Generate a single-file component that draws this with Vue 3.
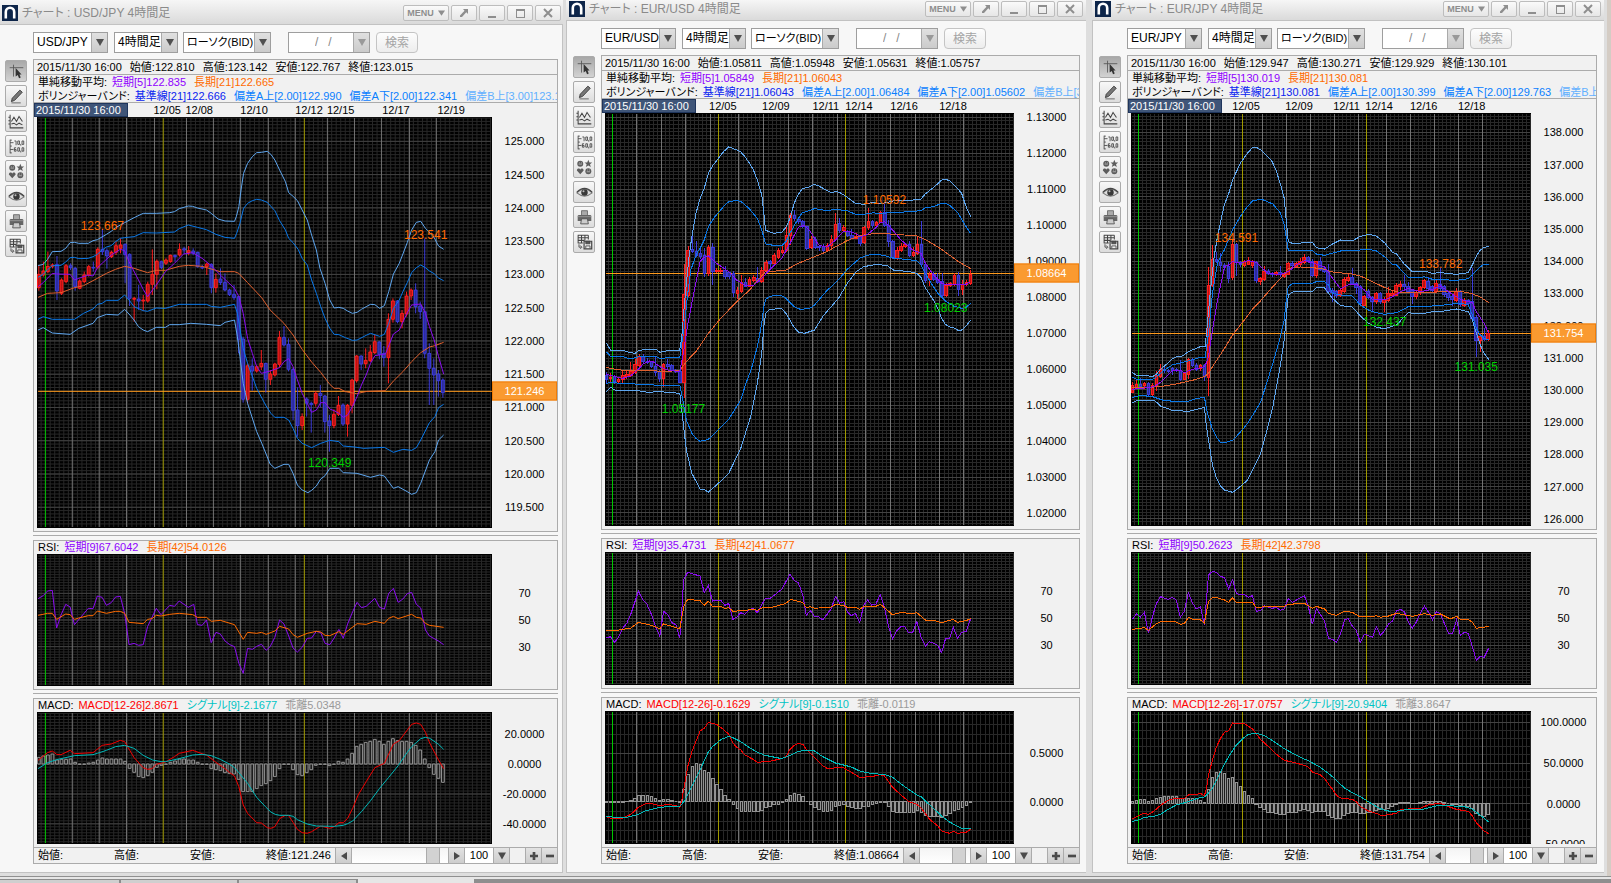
<script setup>
const minutes = '4時間足'
const points = (text) => text.trim().split(/\s+/).map((p) => p.split(',').map(Number))
const line = (text) => 'M' + points(text).map((p) => p.join(' ')).join('L')

const raw = [
  {
    pair: 'USD/JPY', cls: 'first',
    stamp: '2015/11/30 16:00',
    ohlc: ['始値:122.810', '高値:123.142', '安値:122.767', '終値:123.015'],
    sma: ['短期[5]122.835', '長期[21]122.665'],
    boll: ['基準線[21]122.666', '偏差A上[2.00]122.990', '偏差A下[2.00]122.341', '偏差B上[3.00]123.152'],
    x0: 102, w: 1251, start: 107, pitch: 12.483,
    dates: [['12/05', 422], ['12/08', 510], ['12/10', 661], ['12/12', 812], ['12/15', 899], ['12/17', 1051], ['12/19', 1203]],
    days: [199, 273, 348, 425, 513, 587, 661, 738, 812, 901, 975, 1049, 1126, 1200],
    green: 125, weeks: [449, 837],
    close: '121.246',
    main: {
      y0: 351, h: 1233, major: 424, step: 99.8, div: 10, price: 1174,
      axis: ['125.000', '124.500', '124.000', '123.500', '123.000', '122.500', '122.000', '121.500', '121.000', '120.500', '120.000', '119.500'],
      marks: [['123.667', 222, 677, 'hi'], ['123.541', 1111, 704, 'hi'], ['120.349', 847, 1388, 'lo']],
      candles: `r795 823 863 872,r785 813 825 830,r755 799 815 820,r790 795 799 805,b768 793 873 900,r835 840 880 885,r792 797 845 850,b790 797 803 810,b800 805 860 872,r838 843 865 868,r815 825 845 850,r795 800 825 830,b785 802 804 815,r742 748 802 808,b687 748 755 765,b745 752 768 806,r752 757 770 774,r725 737 757 765,r715 735 745 760,b730 733 764 850,b760 763 895 918,r890 895 898 965,b855 897 903 930,r885 900 903 932,r845 853 903 908,r748 823 853 885,r778 784 823 868,b782 785 803 808,r775 780 790 795,r764 766 785 788,b764 766 770 785,r730 748 765 770,b740 746 750 762,r738 752 758 766,b745 753 760 766,b755 757 800 803,b795 801 804 808,r788 792 800 825,b790 793 863 880,r820 838 863 878,b805 837 848 855,b820 847 870 874,b866 870 884 888,b855 883 893 900,b888 890 1018 1060,b1010 1017 1198 1208,r1090 1097 1198 1210,b1075 1098 1113 1172,r1096 1100 1113 1118,r1050 1090 1100 1110,b1088 1090 1138 1178,r1110 1122 1138 1155,r1088 1092 1125 1130,r993 1012 1093 1102,b978 1012 1035 1040,b1015 1033 1108 1114,b1104 1108 1231 1260,b1162 1230 1277 1310,r1240 1250 1277 1290,b1192 1197 1210 1250,b1205 1210 1214 1298,r1173 1180 1210 1220,b1155 1180 1187 1222,b1185 1188 1265 1298,b1245 1263 1277 1355,r1228 1243 1277 1285,r1188 1216 1243 1248,b1210 1215 1272 1278,r1212 1216 1272 1310,r1136 1140 1216 1240,r1065 1068 1142 1148,b1066 1068 1092 1110,r1045 1081 1091 1105,r1035 1056 1082 1086,r1003 1025 1058 1062,b1024 1026 1063 1078,b1038 1060 1073 1100,r940 958 1073 1150,r895 903 958 968,b900 903 965 970,r930 940 965 985,r875 888 942 950,r865 870 888 900,b850 870 920 940,b905 918 935 957,b715 935 1060 1075,b1030 1060 1105 1215,b1075 1105 1125 1215,b1110 1122 1142 1190,b1135 1140 1178 1193`,
      lines: [
        ['band3', '105,797 119,793 131,778 144,755 168,754 181,745 193,728 205,727 217,730 243,730 256,722 268,719 293,703 306,694 318,683 343,668 369,653 394,640 430,640 467,638 480,635 493,626 518,618 530,619 543,624 568,630 581,640 600,657 619,663 645,664 650,650 657,620 663,570 670,520 681,490 694,470 706,458 719,457 735,454 745,463 756,480 769,510 785,545 794,578 806,589 818,602 831,630 845,660 857,705 870,750 880,805 894,850 907,900 919,924 932,922 944,925 956,933 969,940 982,937 994,928 1007,920 1019,913 1031,914 1044,925 1057,917 1069,875 1082,822 1098,790 1108,762 1120,728 1132,690 1145,667 1157,664 1170,685 1181,697 1194,713 1206,738 1220,748'],
        ['band2', '105,832 119,823 131,809 144,797 168,796 181,786 193,773 205,772 217,776 243,775 256,770 268,763 281,750 293,741 306,737 318,725 331,715 343,713 369,710 394,698 430,699 480,696 493,686 518,675 543,682 568,689 594,703 619,712 645,715 651,700 660,670 670,625 681,610 694,602 706,598 719,600 735,607 756,632 769,662 785,690 794,715 806,728 820,748 831,775 845,795 857,840 870,880 882,920 894,955 907,985 919,1003 932,1004 950,1013 969,1021 982,1020 1007,1006 1019,1000 1044,1009 1057,1003 1069,970 1082,925 1098,900 1108,875 1120,848 1132,818 1145,803 1157,795 1170,803 1181,813 1194,821 1206,834 1220,842'],
        ['band2', '105,958 119,950 144,958 205,958 230,940 256,927 268,913 281,910 293,901 325,901 343,885 355,900 369,920 394,932 406,934 430,924 455,925 493,913 568,913 581,919 606,922 619,919 645,913 653,940 669,1045 681,1090 706,1165 732,1218 745,1240 756,1252 781,1252 794,1260 806,1285 818,1315 831,1330 857,1343 882,1330 907,1321 932,1325 944,1338 975,1341 1000,1345 1057,1342 1082,1357 1108,1348 1132,1351 1145,1343 1157,1320 1181,1268 1196,1250 1206,1223 1220,1213'],
        ['band3', '105,990 119,983 144,999 193,1003 217,985 256,970 268,953 293,943 325,945 343,928 355,942 369,960 381,980 394,990 406,995 430,982 455,982 467,974 493,974 525,970 568,973 606,977 619,967 645,960 653,1010 660,1070 669,1150 681,1210 706,1295 720,1330 743,1392 756,1405 781,1393 794,1393 806,1420 818,1455 831,1470 847,1478 857,1471 870,1458 882,1437 894,1427 907,1405 932,1405 944,1418 982,1420 1019,1432 1044,1425 1057,1428 1082,1465 1095,1460 1120,1475 1132,1483 1145,1478 1157,1450 1181,1380 1196,1355 1206,1320 1220,1305'],
        ['ma-long', '105,892 131,880 168,878 205,863 230,857 268,835 293,820 318,808 343,799 369,805 406,818 430,811 455,811 493,799 518,796 556,799 606,815 645,815 657,820 681,848 719,892 743,930 781,970 806,1005 831,1048 857,1086 882,1117 907,1153 919,1165 932,1165 950,1175 980,1181 1010,1174 1060,1172 1082,1143 1108,1115 1132,1085 1157,1058 1181,1041 1196,1037 1220,1027'],
        ['ma-short', '105,860 119,848 144,820 156,822 193,823 205,840 217,835 243,825 256,828 268,803 281,790 306,765 331,748 343,752 355,785 381,840 394,868 406,890 430,855 455,815 480,790 505,762 530,758 556,775 581,797 606,825 645,865 657,890 669,940 681,1015 694,1060 706,1100 719,1120 743,1113 769,1103 781,1085 794,1076 806,1100 818,1140 831,1180 845,1210 857,1237 870,1230 882,1208 894,1208 907,1227 919,1232 932,1240 944,1252 956,1245 969,1220 982,1190 994,1155 1007,1125 1019,1090 1031,1067 1060,1062 1082,1002 1098,990 1120,938 1132,915 1157,912 1170,940 1181,980 1194,1020 1206,1070 1220,1122'],
      ],
    },
    rsi: {
      y0: 72, h: 396, major: 190, step: 80, div: 10, axis: ['70', '50', '30'],
      legend: ['短期[9]67.6042', '長期[42]54.0126'],
      lines: [
        ['ma-short', '105,206 119,197 131,183 144,181 156,294 168,255 181,223 193,231 205,284 243,235 256,236 268,198 281,202 293,226 306,218 318,201 331,199 343,250 355,344 369,340 381,346 394,344 406,290 430,235 443,254 467,226 480,229 493,213 518,232 533,223 543,284 556,286 568,270 581,338 594,307 606,312 619,333 632,344 645,350 657,400 669,430 681,355 694,358 706,349 719,343 732,361 743,350 756,322 769,270 781,282 794,318 806,354 818,366 831,352 845,325 857,324 870,304 882,308 894,340 907,344 919,324 932,298 944,325 956,282 970,245 982,217 994,233 1007,229 1031,205 1044,232 1057,237 1069,190 1082,175 1095,217 1108,207 1120,191 1132,187 1145,223 1157,234 1170,300 1181,318 1206,333 1220,344'],
        ['rsi-long', '105,256 131,250 144,250 156,268 181,252 193,254 205,268 217,264 243,257 256,257 268,243 293,250 318,244 331,244 343,250 355,277 394,281 406,268 418,266 430,256 443,258 467,253 493,250 530,254 543,262 568,262 581,274 606,271 645,284 669,328 681,307 706,310 719,307 732,313 756,303 769,289 794,297 806,314 818,322 845,310 870,304 882,306 894,316 907,317 932,305 944,313 982,281 1007,283 1031,274 1057,280 1069,265 1082,259 1095,266 1132,253 1145,262 1157,264 1170,280 1181,286 1220,292'],
      ],
    },
    macd: {
      y0: 546, h: 396, major: 613, step: 89.5, div: 10, axis: ['20.0000', '0.0000', '-20.0000', '-40.0000'],
      legend: ['MACD[12-26]2.8671', 'シグナル[9]-2.1677', '乖離5.0348'],
      base: 702,
      bars: '682 678 675 672 690 688 688 687 697 703 703 699 697 690 684 687 687 687 687 694 715 727 740 743 737 727 712 706 703 697 693 687 687 690 690 697 703 703 716 719 722 728 731 732 748 785 785 785 776 767 761 752 740 716 703 703 719 734 737 728 719 706 703 703 707 703 694 697 687 670 649 643 637 634 628 634 643 634 626 632 634 634 637 646 660 687 713 733 745 757',
      lines: [
        ['macd-line', '105,691 131,668 144,663 156,673 168,674 193,661 205,671 256,668 281,646 306,642 331,631 343,635 369,683 394,713 406,718 418,716 430,703 455,696 480,680 493,670 530,661 556,671 568,675 594,697 619,716 632,728 645,738 657,770 669,825 681,850 706,878 719,879 735,893 745,895 756,890 769,866 785,856 794,857 806,877 818,898 831,908 845,910 857,905 882,888 907,895 919,890 932,878 944,878 956,865 970,835 985,795 1007,755 1031,713 1057,700 1082,642 1098,632 1132,583 1145,579 1157,583 1170,607 1182,640 1206,690 1220,716'],
        ['signal-line', '105,716 131,698 156,689 205,677 256,674 268,670 293,661 318,650 343,646 369,655 394,676 420,690 443,695 455,695 493,686 530,675 556,673 581,677 606,688 632,703 645,713 657,728 681,760 706,802 730,830 745,846 757,853 769,856 794,856 806,859 818,869 845,882 870,888 919,889 944,886 956,881 970,873 994,845 1019,812 1044,775 1069,742 1095,707 1120,667 1132,650 1157,626 1170,622 1182,625 1206,643 1220,658'],
      ],
    },
  },
  {
    pair: 'EUR/USD', cls: 'second',
    stamp: '2015/11/30 16:00',
    ohlc: ['始値:1.05811', '高値:1.05948', '安値:1.05631', '終値:1.05757'],
    sma: ['短期[5]1.05849', '長期[21]1.06043'],
    boll: ['基準線[21]1.06043', '偏差A上[2.00]1.06484', '偏差A下[2.00]1.05602', '偏差B上[3.00]1.06704'],
    x0: 131, w: 1187, start: 135, pitch: 11.88,
    dates: [['12/05', 433], ['12/09', 587], ['12/11', 733], ['12/14', 828], ['12/16', 959], ['12/18', 1101]],
    days: [222, 294, 365, 437, 519, 590, 663, 734, 805, 888, 960, 1031, 1102, 1171],
    green: 152, weeks: [460, 829],
    close: '1.08664',
    main: {
      y0: 339, h: 1239, major: 352, step: 107.9, div: 10, price: 820,
      axis: ['1.13000', '1.12000', '1.11000', '1.10000', '1.09000', '1.08000', '1.07000', '1.06000', '1.05000', '1.04000', '1.03000', '1.02000'],
      marks: [['1.10592', 879, 599, 'hi'], ['1.05177', 296, 1228, 'lo'], ['1.08023', 1057, 923, 'lo']],
      candles: `b1115 1125 1137 1150,r1120 1132 1136 1148,b1125 1130 1143 1152,r1132 1137 1143 1150,r1112 1125 1138 1148,r1110 1123 1128 1138,r1087 1115 1125 1130,r1078 1093 1117 1122,r1063 1070 1095 1100,b1063 1070 1083 1088,b1075 1083 1088 1092,b1083 1085 1100 1104,b1070 1100 1116 1127,b1110 1113 1136 1145,r1088 1092 1136 1160,b1078 1092 1100 1106,b1092 1097 1110 1114,b1108 1110 1114 1118,b1110 1113 1148 1150,r793 883 1148 1195,r738 750 885 890,b698 748 755 760,b724 755 765 772,b740 760 768 776,b745 765 820 832,r735 743 820 828,b728 743 815 855,r805 811 815 820,r805 810 815 820,b798 810 830 838,b815 818 830 836,b812 820 878 890,r862 870 880 897,r825 848 873 878,b833 848 858 862,r830 838 858 862,r825 833 842 846,b802 835 845 850,r800 810 845 850,r780 787 812 816,b780 785 790 806,r760 767 790 798,r745 752 772 778,r735 750 757 762,r675 705 752 756,r640 646 705 735,b630 647 655 662,b655 658 665 672,b660 663 680 684,b678 680 745 750,r708 718 743 748,b712 717 743 746,b734 738 743 752,b732 738 752 756,r728 735 750 755,r705 717 737 747,r640 672 718 724,b655 670 690 700,r675 683 690 697,b690 695 707 712,b687 705 714 718,r700 708 714 718,b704 708 730 738,r677 682 728 732,r625 663 683 690,b660 663 675 685,r664 668 677 685,r634 637 667 670,b612 637 675 680,b660 675 725 740,b720 725 773 778,r740 750 775 780,r730 738 750 755,r728 732 738 745,b723 733 765 770,r742 758 765 772,r710 732 760 765,b662 733 793 800,b790 793 840 850,r815 823 838 858,b815 823 838 844,b820 838 847 852,b820 845 885 890,r848 855 885 890,r845 850 857 862,r820 825 853 858,b815 825 868 887,r840 852 868 885,r840 848 854 858,r810 822 850 854`,
      lines: [
        ['band3', '135,1030 147,1050 182,1050 194,1055 218,1060 230,1051 254,1048 280,1048 290,1057 313,1052 348,1050 354,1010 360,930 367,850 375,770 383,710 395,640 407,595 419,565 431,520 443,498 460,475 475,455 490,441 502,445 513,450 525,456 537,470 549,488 561,508 573,540 586,585 592,640 597,691 608,695 620,700 644,697 656,682 668,655 680,610 692,583 704,566 720,562 739,553 751,558 775,571 787,578 800,575 812,577 834,592 858,610 882,613 910,607 930,612 950,607 980,600 1010,602 1048,597 1060,582 1084,563 1108,540 1119,538 1131,542 1154,565 1166,580 1179,620 1192,650'],
        ['band2', '135,1055 147,1069 182,1070 206,1077 230,1070 280,1069 290,1076 313,1073 348,1072 360,990 370,890 380,810 390,780 400,755 407,745 419,720 431,680 450,650 475,620 490,605 513,601 525,604 549,625 573,655 586,690 597,732 620,736 644,737 656,725 668,700 692,655 704,638 720,633 739,626 775,632 800,628 834,632 858,643 890,642 910,638 930,642 960,637 1000,636 1048,632 1060,624 1084,620 1108,610 1119,610 1131,616 1154,637 1179,680 1192,700'],
        ['band2', '135,1150 147,1148 182,1150 218,1152 254,1154 290,1156 348,1156 355,1190 367,1260 383,1300 395,1315 407,1324 431,1318 455,1295 490,1258 525,1200 540,1150 555,1110 573,1040 586,970 592,920 597,898 608,890 625,886 644,887 656,895 680,920 700,929 730,923 739,915 775,872 810,838 834,808 870,775 890,766 915,763 940,766 960,773 1000,778 1036,782 1048,795 1060,820 1084,860 1097,880 1119,903 1142,918 1166,925 1179,922 1192,910'],
        ['band3', '135,1175 147,1162 160,1170 200,1172 218,1170 254,1177 290,1175 348,1180 355,1240 367,1350 383,1420 407,1467 419,1469 431,1476 455,1455 490,1420 525,1345 540,1295 555,1245 573,1150 586,1060 592,980 597,940 608,928 644,926 656,940 680,982 692,996 710,1000 739,990 764,948 810,893 834,850 860,815 882,800 920,793 950,797 970,811 1010,814 1036,820 1048,832 1060,862 1084,900 1097,925 1108,955 1119,973 1131,981 1142,983 1154,990 1166,990 1179,978 1192,961'],
        ['ma-long', '135,1102 160,1108 194,1112 242,1111 301,1114 348,1112 367,1085 383,1067 395,1055 431,1000 467,955 513,905 549,872 573,843 597,815 644,812 656,810 692,790 739,770 775,755 800,740 834,722 858,712 890,703 930,700 1000,705 1036,708 1060,718 1108,748 1154,783 1192,806'],
        ['ma-short', '135,1123 147,1126 182,1135 206,1127 230,1105 242,1092 260,1083 270,1085 290,1100 313,1110 348,1115 360,1050 370,980 383,910 400,820 407,785 419,772 431,768 455,790 490,815 513,840 537,855 560,858 586,835 608,810 644,775 668,730 692,682 710,676 727,695 751,735 775,742 800,720 824,693 850,697 875,710 893,703 917,683 930,668 942,665 966,690 990,720 1024,750 1048,760 1060,788 1084,825 1108,850 1119,853 1154,854 1179,853 1192,845'],
      ],
    },
    rsi: {
      y0: 66, h: 399, major: 184, step: 81, div: 10, axis: ['70', '50', '30'],
      legend: ['短期[9]35.4731', '長期[42]41.0677'],
      lines: [
        ['ma-short', '135,324 147,320 159,337 171,320 182,295 194,280 206,252 228,184 240,208 252,221 266,254 278,290 290,318 301,244 313,254 325,278 337,284 348,325 353,260 359,150 371,127 383,131 407,138 419,187 431,167 443,213 467,211 479,226 490,220 502,268 513,262 525,248 537,253 549,240 561,235 573,248 596,206 608,207 644,178 668,133 680,151 692,158 705,195 715,256 727,242 739,259 751,260 763,270 787,237 800,200 812,219 824,215 834,245 846,257 858,250 870,277 882,226 893,210 905,225 917,222 930,194 942,232 954,290 966,327 978,302 990,290 1000,289 1013,309 1024,307 1036,274 1048,320 1061,348 1073,335 1097,346 1108,368 1119,327 1131,325 1142,292 1154,325 1166,307 1179,304 1192,267'],
        ['rsi-long', '135,301 159,303 182,298 206,294 228,277 266,286 290,296 301,282 325,289 348,297 353,265 360,228 371,208 407,212 419,226 431,214 443,229 467,230 479,235 490,233 502,244 537,241 561,238 573,241 586,234 620,231 656,220 670,208 705,217 715,233 727,230 739,235 787,231 800,223 824,227 834,232 858,232 870,238 882,229 917,229 930,223 942,233 966,255 978,250 1000,247 1013,252 1036,248 1061,270 1084,270 1108,279 1119,274 1142,268 1154,277 1179,272 1192,266'],
      ],
    },
    macd: {
      y0: 543, h: 399, major: 670, step: 145, div: 5, axis: ['0.5000', '0.0000'],
      legend: ['MACD[12-26]-0.1629', 'シグナル[9]-0.1510', '乖離-0.0119'],
      base: 815,
      bars: '817 817 817 817 817 814 810 805 796 796 796 799 805 811 808 808 811 815 818 778 732 710 700 702 720 727 744 762 778 796 808 822 836 843 845 845 845 845 840 833 830 824 822 817 808 796 790 792 798 815 824 833 839 843 845 842 828 826 824 830 833 834 836 830 828 824 821 818 817 828 845 848 848 848 848 848 842 846 856 858 860 860 862 857 850 840 839 833 826 817',
      lines: [
        ['macd-line', '135,860 147,865 182,865 206,853 228,832 250,821 266,821 290,827 313,823 337,827 348,832 354,810 371,710 383,665 407,603 419,595 431,577 455,583 467,592 490,612 502,638 513,652 525,660 537,675 561,688 573,697 608,694 644,686 656,680 668,658 680,646 692,640 705,643 715,658 739,682 763,707 775,715 787,717 800,712 824,714 846,727 870,742 905,740 930,734 942,738 966,772 990,795 1013,815 1036,823 1048,833 1073,868 1097,888 1108,903 1131,910 1142,904 1154,910 1179,907 1192,898'],
        ['signal-line', '135,859 159,862 194,862 228,853 250,842 290,832 337,828 348,829 360,815 371,795 383,770 407,720 431,665 443,650 467,629 490,619 502,623 525,635 549,652 573,667 596,676 620,681 644,686 668,676 692,664 720,660 739,663 763,680 800,699 846,711 870,723 905,731 942,733 966,742 990,762 1036,795 1048,800 1084,835 1108,858 1131,876 1154,889 1166,895 1192,896'],
      ],
    },
  },
  {
    pair: 'EUR/JPY', cls: 'third',
    stamp: '2015/11/30 16:00',
    ohlc: ['始値:129.947', '高値:130.271', '安値:129.929', '終値:130.101'],
    sma: ['短期[5]130.019', '長期[21]130.081'],
    boll: ['基準線[21]130.081', '偏差A上[2.00]130.399', '偏差A下[2.00]129.763', '偏差B上[3.00]130.558'],
    x0: 137, w: 1193, start: 141, pitch: 11.92,
    dates: [['12/05', 439], ['12/09', 597], ['12/11', 740], ['12/14', 836], ['12/16', 969], ['12/18', 1112]],
    days: [231, 302, 375, 446, 530, 600, 672, 744, 816, 899, 970, 1042, 1113, 1185],
    green: 160, weeks: [469, 839],
    close: '131.754',
    main: {
      y0: 339, h: 1239, major: 397, step: 96.6, div: 10, price: 1000,
      axis: ['138.000', '137.000', '136.000', '135.000', '134.000', '133.000', '132.000', '131.000', '130.000', '129.000', '128.000', '127.000', '126.000'],
      marks: [['134.591', 387, 713, 'hi'], ['133.782', 996, 791, 'hi'], ['132.437', 829, 967, 'lo'], ['131.035', 1102, 1102, 'lo']],
      candles: `r1145 1155 1178 1180,r1140 1152 1162 1168,b1135 1152 1160 1168,r1146 1150 1157 1168,b1146 1150 1183 1192,r1150 1155 1183 1190,r1113 1125 1157 1172,r1092 1108 1128 1134,b1100 1108 1112 1118,b1106 1110 1115 1120,b1100 1106 1112 1125,b1104 1108 1112 1116,b1080 1110 1137 1142,r1115 1120 1137 1140,r1075 1078 1123 1138,b1074 1077 1097 1100,b1090 1095 1107 1112,r1092 1097 1105 1112,b1092 1095 1130 1142,r800 856 1133 1187,r735 777 856 862,b755 777 785 788,b758 787 797 815,b790 797 803 810,b785 800 835 850,r720 733 833 840,b728 733 788 828,b783 787 793 800,r780 785 797 800,r770 783 792 796,r780 785 797 804,b784 787 840 850,r830 835 843 855,r797 813 837 842,b808 813 820 826,b815 820 824 830,r812 818 824 828,b798 817 824 832,r816 822 830 834,r785 790 823 826,b783 790 797 801,r786 790 798 802,r775 783 793 797,r762 773 788 792,b768 773 782 788,b778 783 827 830,r782 785 827 835,b772 783 808 812,b800 806 813 818,b793 813 873 876,b865 870 877 905,b870 875 887 895,r866 870 887 892,r830 838 873 880,r823 833 840 846,b805 833 850 856,b845 850 862 883,b856 860 910 914,r885 890 915 918,b868 873 893 898,b888 893 905 932,r875 880 905 912,b875 880 905 912,r890 898 908 937,r860 880 900 905,r873 880 886 892,r850 857 885 888,r843 852 858 870,b825 852 860 866,b845 858 875 880,b868 872 890 912,r870 877 888 897,r858 862 878 884,r838 842 862 868,b830 843 865 870,b855 860 872 878,r838 850 873 878,b805 852 865 872,b856 860 883 890,b876 880 893 902,b886 890 898 917,r865 875 900 905,b870 875 912 920,r895 900 915 920,b896 900 910 915,b805 905 955 960,b945 953 1020 1072,r1000 1008 1020 1055,b985 1008 1018 1024,r990 1000 1017 1022`,
      lines: [
        ['band3', '141,1118 153,1125 177,1125 201,1130 213,1122 225,1108 237,1098 260,1077 272,1070 290,1068 308,1055 320,1050 344,1040 358,1040 364,980 375,860 385,770 395,710 415,615 428,582 440,540 463,490 480,465 499,443 511,442 525,450 547,472 558,485 570,512 582,550 594,595 600,660 606,725 618,730 640,730 654,727 678,727 690,743 714,747 738,732 762,720 800,721 821,709 845,703 869,708 893,728 917,757 929,762 952,792 976,815 1012,813 1036,820 1060,818 1108,823 1143,818 1155,795 1167,768 1179,750 1190,742 1204,740'],
        ['band2', '141,1132 153,1138 201,1139 213,1130 237,1110 260,1095 308,1083 344,1072 358,1072 368,1000 380,880 395,790 415,750 440,690 463,650 480,625 499,603 525,597 560,612 582,638 594,675 606,750 630,753 678,752 690,762 714,766 762,753 821,750 845,747 869,753 893,770 917,793 929,795 952,820 964,832 1000,833 1012,830 1036,838 1108,841 1143,836 1155,825 1179,800 1190,793 1204,793'],
        ['band2', '141,1192 165,1186 201,1190 237,1202 272,1204 308,1204 332,1196 356,1192 365,1240 380,1287 392,1312 404,1327 416,1328 440,1321 460,1300 485,1270 523,1208 540,1155 560,1090 580,1020 594,960 600,900 606,860 620,850 678,850 690,845 714,845 726,855 738,880 762,885 797,888 821,915 845,930 869,938 893,943 929,938 964,920 1036,918 1072,915 1119,909 1143,915 1155,945 1167,985 1179,1005 1190,1015 1204,1020'],
        ['band3', '141,1208 153,1202 177,1200 206,1200 225,1218 260,1231 308,1234 332,1228 356,1222 362,1280 380,1395 392,1435 404,1458 416,1470 440,1477 460,1462 485,1440 523,1362 540,1300 560,1220 580,1110 594,1020 600,950 606,885 620,876 678,875 690,863 714,863 738,895 762,917 797,921 821,948 845,970 869,982 893,986 929,975 964,938 988,941 1012,940 1036,935 1072,933 1108,927 1143,935 1155,960 1167,1000 1179,1035 1190,1060 1204,1079'],
        ['ma-long', '141,1162 189,1162 225,1160 272,1152 332,1138 356,1130 368,1120 380,1100 416,1045 440,1005 475,960 499,928 523,903 560,860 594,824 606,805 642,801 702,805 738,816 797,822 821,828 857,845 905,868 941,878 988,877 1048,876 1119,874 1155,881 1180,892 1204,908'],
        ['ma-short', '141,1168 165,1165 189,1163 206,1160 225,1147 260,1112 284,1110 296,1118 320,1108 344,1104 358,1098 368,1070 380,990 395,900 416,800 428,795 440,785 463,790 487,782 511,787 523,800 547,820 582,824 606,815 630,795 654,782 666,785 714,800 738,835 762,866 785,855 809,852 833,870 857,898 893,900 917,890 941,875 964,865 1000,875 1036,868 1060,858 1084,875 1119,898 1155,908 1167,935 1190,970 1204,1000'],
      ],
    },
    rsi: {
      y0: 66, h: 399, major: 184, step: 81, div: 10, axis: ['70', '50', '30'],
      legend: ['短期[9]50.2623', '長期[42]42.3798'],
      lines: [
        ['ma-short', '141,268 153,252 165,261 177,247 189,310 201,260 213,220 225,200 248,208 260,202 272,210 284,262 296,244 308,188 320,218 332,237 344,230 356,285 368,135 380,124 392,127 404,139 416,143 428,176 440,149 451,190 463,195 475,193 487,202 499,197 511,244 523,242 535,228 558,235 570,232 582,241 594,237 606,206 618,217 654,197 666,230 678,283 690,235 714,273 726,325 738,328 750,337 762,312 774,270 785,266 797,288 809,302 821,337 833,312 857,322 869,290 881,316 893,302 905,282 917,273 929,243 941,238 952,245 964,275 976,294 988,276 1000,250 1012,228 1024,246 1036,270 1048,245 1060,252 1084,310 1096,310 1108,270 1119,316 1131,307 1143,310 1155,350 1167,390 1179,378 1190,382 1204,354'],
        ['rsi-long', '141,298 177,293 189,301 213,281 225,275 272,276 284,283 296,281 308,262 320,268 344,270 356,279 368,215 380,203 392,203 416,210 428,217 440,203 451,217 499,217 511,233 547,229 594,230 606,223 654,220 678,235 690,229 714,237 726,250 750,256 774,244 797,247 821,261 845,259 857,261 869,257 881,262 905,258 929,250 976,259 1012,251 1036,256 1060,252 1084,264 1096,264 1108,259 1119,268 1143,268 1155,277 1167,295 1204,289'],
      ],
    },
    macd: {
      y0: 543, h: 399, major: 577, step: 122, div: 5, axis: ['100.0000', '50.0000', '0.0000', '-50.0000'],
      legend: ['MACD[12-26]-17.0757', 'シグナル[9]-20.9404', '乖離3.8647'],
      base: 821,
      bars: '815 811 808 808 814 810 805 801 798 798 798 798 806 804 804 804 806 811 817 778 742 727 724 730 745 742 757 769 784 796 805 822 833 838 846 848 851 854 854 848 848 846 842 839 842 848 845 843 845 856 863 866 866 857 851 848 846 850 851 848 848 840 838 838 834 830 824 817 817 817 820 820 817 814 814 814 814 814 817 821 823 824 825 828 830 835 850 856 860 854',
      lines: [
        ['macd-line', '141,866 165,854 177,850 189,853 206,843 225,826 248,811 272,804 296,806 308,795 332,793 344,790 356,797 362,775 368,735 380,690 392,650 404,625 416,607 428,602 440,579 475,580 487,589 499,596 523,628 547,650 560,663 582,682 594,691 618,696 654,706 666,712 678,726 702,735 714,745 726,762 738,778 750,796 762,804 797,808 809,815 821,830 845,843 869,850 881,856 893,856 929,850 941,840 970,836 1000,835 1024,824 1060,820 1084,830 1108,838 1143,844 1155,858 1167,878 1190,903 1204,911'],
        ['signal-line', '141,874 165,868 177,862 201,860 225,853 248,838 272,825 308,815 332,806 358,800 380,775 404,725 428,680 451,645 475,622 487,613 511,610 535,617 558,631 594,656 618,669 642,682 666,692 702,712 738,740 750,752 774,774 797,788 821,800 845,815 869,830 893,841 917,845 952,840 1012,837 1048,828 1084,827 1131,830 1155,837 1179,856 1204,876'],
      ],
    },
  },
]

function buildPlot(win, plot) {
  const right = win.x0 + win.w
  const bottom = plot.y0 + plot.h
  let minor = ''
  for (let i = 0; i <= 100; i++) minor += `M${win.start + (i - 0.5) * win.pitch} ${plot.y0 + 3}V${bottom - 3}`
  const gap = plot.step / plot.div
  const first = plot.major - Math.floor((plot.major - plot.y0 - 3) / gap) * gap
  for (let y = first; y < bottom - 3; y += gap) minor += `M${win.x0 + 3} ${y}H${right - 3}`
  let major = ''
  for (let y = plot.major; y < bottom; y += plot.step) major += `M${win.x0 + 3} ${y}H${right - 3}`
  const vertical = (xs) => xs.map((x) => `M${x} ${plot.y0 + 3}V${bottom - 3}`).join('')
  const half = win.pitch * 0.31
  const shapes = { r: '', b: '' }
  if (plot.candles) {
    plot.candles.split(',').forEach((text, i) => {
      const kind = text[0]
      const [hi, top, low, end] = text.slice(1).split(' ').map(Number)
      const x = win.start + i * win.pitch
      shapes[kind] += `M${x} ${hi}V${top}M${x} ${low}V${end}M${x - half} ${top}H${x + half}V${low}H${x - half}Z`
    })
  }
  let bars = ''
  if (plot.bars) {
    plot.bars.split(' ').forEach((end, i) => {
      const x = win.start + i * win.pitch
      bars += `M${x - half} ${plot.base}H${x + half}V${end}H${x - half}Z`
    })
  }
  return {
    ...plot,
    box: `${win.x0} ${plot.y0} ${win.w} ${plot.h}`,
    minor, major,
    days: vertical(win.days), weeks: vertical(win.weeks), green: vertical([win.green]),
    red: shapes.r, blue: shapes.b, barPath: bars,
    priceLine: plot.price ? `M${win.x0 + 3} ${plot.price}H${right}` : '',
    curves: plot.lines.map(([cls, text]) => ({ cls, d: line(text) })),
    ticks: plot.axis.map((text, i) => ({ text, top: ((plot.major + i * plot.step - plot.y0) / plot.h) * 100 + '%' })),
    tag: plot.price ? ((plot.price - plot.y0) / plot.h) * 100 + '%' : '',
    labels: (plot.marks || []).map(([text, x, y, cls]) => ({
      text, cls, left: ((x - win.x0) / win.w) * 100 + '%', top: ((y - plot.y0) / plot.h) * 100 + '%',
    })),
  }
}

const windows = raw.map((win) => ({
  ...win,
  dateLabels: win.dates.map(([text, x]) => ({ text, left: ((x - win.x0) / win.w) * 100 + '%' })),
  plots: ['main', 'rsi', 'macd'].map((key) => ({ key, ...buildPlot(win, win[key]) })),
}))
const tools = ['カーソル', '描画', 'テクニカル', '価格表示', 'アイコン', '表示', '印刷', 'CSV保存']
</script>

<template>
  <div class="desktop">
    <section v-for="win in windows" :key="win.pair" class="window" :class="win.cls">
      <header class="titlebar">
        <svg class="logo" viewBox="0 0 16 16" aria-hidden="true"><rect width="16" height="16" fill="#0d2549" /><path d="M3.8 13.5V7a4.2 4.2 0 0 1 8.4 0v6.5" fill="none" stroke="#fff" stroke-width="2.6" /></svg>
        <h1>チャート : {{ win.pair }} {{ minutes }}</h1>
        <button type="button" class="cap menu">MENU <svg viewBox="0 0 8 6"><path d="M0 0h8L4 6z" /></svg></button>
        <button type="button" class="cap" aria-label="切り離し"><svg viewBox="0 0 12 12"><path d="M10 2v5L8.300 5.300 4 10H2V8.500L6.500 3.800 5 2z" /></svg></button>
        <button type="button" class="cap" aria-label="最小化"><svg viewBox="0 0 12 12"><path d="M2 9h8v2H2z" /></svg></button>
        <button type="button" class="cap" aria-label="最大化"><svg viewBox="0 0 12 12"><path d="M2 2h9v9H2zM3 4v6h7V4z" fill-rule="evenodd" /></svg></button>
        <button type="button" class="cap" aria-label="閉じる"><svg viewBox="0 0 12 12"><path d="M2 2l8 8M10 2l-8 8" fill="none" stroke="#8e8e8e" stroke-width="2" /></svg></button>
      </header>

      <div class="body">
        <form class="controls" @submit.prevent>
          <span class="combo pair"><select aria-label="通貨ペア"><option>{{ win.pair }}</option></select><i><svg viewBox="0 0 8 7"><path d="M0 0h8L4 7z" /></svg></i></span>
          <span class="combo span"><select aria-label="足種"><option>{{ minutes }}</option></select><i><svg viewBox="0 0 8 7"><path d="M0 0h8L4 7z" /></svg></i></span>
          <span class="combo kind"><select aria-label="チャート種類"><option>ローソク(BID)</option></select><i><svg viewBox="0 0 8 7"><path d="M0 0h8L4 7z" /></svg></i></span>
          <span class="combo date"><input type="text" value="/   /" aria-label="日付" /><i><svg viewBox="0 0 8 7"><path d="M0 0h8L4 7z" /></svg></i></span>
          <button type="button" class="search">検索</button>
        </form>

        <nav class="tools" aria-label="ツール">
          <button v-for="(tool, i) in tools" :key="tool" type="button" :class="{ on: i === 0 }" :aria-label="tool">
            <svg v-if="i === 0" viewBox="0 0 20 20"><path d="M2 5.500h16M6.500 2v14" stroke="#555" fill="none" /><path d="M9 6v10l2.500-2 1.500 4 2-1-1.500-3.500H16z" fill="#333" /></svg>
            <svg v-else-if="i === 1" viewBox="0 0 20 20"><path d="M5 12L14 2.500 16.800 5 7.800 14.500 4 16z" fill="#777" stroke="#333" stroke-width="1" /><path d="M4 17.500h11" stroke="#555" /></svg>
            <svg v-else-if="i === 2" viewBox="0 0 20 20" fill="none" stroke="#444" stroke-width="1.200"><path d="M2.500 2v15.500H18M.5 5h2M.5 9h2M.5 13h2" /><path d="M4 10l3-5 3 5 3-6 4 6M4 13l3-1 3 2 3-2 4 2" /></svg>
            <svg v-else-if="i === 3" viewBox="0 0 20 20" fill="none" stroke="#444"><path d="M2.500 2v16M2.500 2.500h2M2.500 5.500h4M2.500 9.500h2M2.500 13.500h4M2.500 17.500h2M7.500 3.500h2v5M11.500 3.500h2v4h-2zM16.500 3.500h2v4h-2zM15 7v2M9.500 11.500h-2v4h2v-2h-2M11.500 11.500h2v4h-2zM16.500 11.500h2v4h-2zM15 15v2" /></svg>
            <svg v-else-if="i === 4" viewBox="0 0 20 20" fill="#5c5c5c"><circle cx="5" cy="5.500" r="3.500" /><path d="M14.500 1l1.300 3 3.200.2-2.500 2.100.9 3.200-2.900-1.800-2.900 1.800.9-3.200L10 4.200l3.200-.2zM5 18l-4-4.500c0-3 3.500-3 4-1 .5-2 4-2 4 1z" /><circle cx="14.500" cy="14.500" r="3.500" /><path d="M3 6h4M3.500 4.500h1M6 4.500h1M12.500 15h4M13 13h1M15.500 13h1" stroke="#ccc" stroke-width=".8" /></svg>
            <svg v-else-if="i === 5" viewBox="0 0 20 20"><path d="M1 10.500Q10 1 19 10.500 10 18 1 10.500z" fill="#ddd" stroke="#777" stroke-width="1.200" /><path d="M1 9.500Q10 1 19 9.500" fill="none" stroke="#444" stroke-width="1.400" /><circle cx="10" cy="10" r="3.800" fill="#383838" /><circle cx="8.800" cy="8.600" r="1.200" fill="#bbb" /></svg>
            <svg v-else-if="i === 6" viewBox="0 0 20 20"><path d="M6.500 2h7v6h-7z" fill="#aaa" stroke="#666" /><path d="M3 7h14l1 1v6H2V8z" fill="#666" /><path d="M2 9h16" stroke="#999" /><path d="M6.500 11.500h7l1 6h-9z" fill="#ccc" stroke="#4c4c4c" /></svg>
            <svg v-else viewBox="0 0 20 20" fill="none" stroke="#444"><path d="M2 1.500h12.500M2 4.500h12.500M2 7.500h8M2 10.500h6M2.500 1.500v9M6.500 1.500v9M10.500 1.500v6M14.500 1.500v5" stroke-width="1.200" /><path d="M9.500 8.500h9v9h-9z" fill="#eee" stroke-width="1.400" /><path d="M11.500 8.500h5v3h-5z" fill="#555" /><path d="M11.500 17v-3h5v3M3.500 12v3.500H6M5 13.500l2 2-2 2" /></svg>
          </button>
        </nav>

        <main class="panels">
          <article v-for="plot in win.plots" :key="plot.key" class="panel" :class="plot.key">
            <template v-if="plot.key === 'main'">
              <div class="row quote"><span>{{ win.stamp }}</span><span v-for="item in win.ohlc" :key="item">{{ item }}</span></div>
              <div class="studies">
                <div class="row"><b>単純移動平均:</b><span class="c-short">{{ win.sma[0] }}</span><span class="c-long">{{ win.sma[1] }}</span></div>
                <div class="row"><b>ボリンジャーバンド:</b><span class="c-base">{{ win.boll[0] }}</span><span class="c-band2">{{ win.boll[1] }}</span><span class="c-band2">{{ win.boll[2] }}</span><span class="c-band3">{{ win.boll[3] }}</span></div>
              </div>
              <div class="dates">
                <div class="scale"><time v-for="d in win.dateLabels" :key="d.text" :style="{ left: d.left }">{{ d.text }}</time></div>
                <mark>{{ win.stamp }}</mark>
              </div>
            </template>
            <div v-else-if="plot.key === 'rsi'" class="row head"><b>RSI:</b><span class="c-short">{{ plot.legend[0] }}</span><span class="c-long">{{ plot.legend[1] }}</span></div>
            <div v-else class="row head"><b>MACD:</b><span class="c-macd">{{ plot.legend[0] }}</span><span class="c-signal">{{ plot.legend[1] }}</span><span class="c-diff">{{ plot.legend[2] }}</span></div>

            <div class="chart">
              <div class="plot">
                <svg :viewBox="plot.box" preserveAspectRatio="none" role="img" :aria-label="win.pair + ' ' + plot.key">
                  <path class="minor" :d="plot.minor" />
                  <path class="major" :d="plot.major" />
                  <path class="day" :d="plot.days" />
                  <path class="week" :d="plot.weeks" />
                  <path class="now" :d="plot.green" />
                  <path class="bars" :d="plot.barPath" />
                  <path class="price" :d="plot.priceLine" />
                  <path class="down" :d="plot.blue" />
                  <path class="up" :d="plot.red" />
                  <path v-for="(curve, i) in plot.curves" :key="i" :class="curve.cls" :d="curve.d" />
                </svg>
                <span v-for="m in plot.labels" :key="m.text" class="mark" :class="m.cls" :style="{ left: m.left, top: m.top }">{{ m.text }}</span>
              </div>
              <div class="axis">
                <span v-for="t in plot.ticks" :key="t.text" class="tick" :style="{ top: t.top }">{{ t.text }}</span>
                <span v-if="plot.tag" class="tag" :style="{ top: plot.tag }">{{ win.close }}</span>
              </div>
            </div>

            <footer v-if="plot.key === 'macd'" class="status">
              <span class="cell">始値:</span><span class="cell">高値:</span><span class="cell">安値:</span><span class="cell last">終値:{{ win.close }}</span>
              <button type="button" aria-label="左へ"><svg viewBox="0 0 6 8"><path d="M6 0v8L0 4z" /></svg></button>
              <input type="range" min="0" max="100" value="90" aria-label="スクロール" />
              <button type="button" aria-label="右へ"><svg viewBox="0 0 6 8"><path d="M0 0v8l6-4z" /></svg></button>
              <input type="text" class="count" value="100" aria-label="本数" />
              <button type="button" aria-label="本数を選択"><svg viewBox="0 0 8 7"><path d="M0 0h8L4 7z" /></svg></button>
              <span class="blank"></span>
              <button type="button" aria-label="拡大"><svg viewBox="0 0 9 9"><path d="M3 0h3v3h3v3H6v3H3V6H0V3h3z" /></svg></button>
              <button type="button" aria-label="縮小"><svg viewBox="0 0 9 9"><path d="M0 3h9v3H0z" /></svg></button>
            </footer>
          </article>
        </main>
      </div>
    </section>
    <div class="edge"></div>
    <div class="taskbar"><i></i><i></i><i></i><span></span></div>
  </div>
</template>

<style>
html, body { margin: 0; background: #f7f7f7; }
</style>

<style scoped>
* { box-sizing: border-box; }
.desktop {
  display: grid;
  grid-template-columns: 566fr 523fr 518fr 4px;
  grid-template-rows: minmax(0, 1fr) 7px;
  height: 100vh;
  min-height: 640px;
  overflow: hidden;
  background: #dedede;
  color: #000;
  font: 11px/14px "Liberation Sans", "Noto Sans CJK JP", sans-serif;
}
button, input, select { font: inherit; color: inherit; margin: 0; padding: 0; border-radius: 0; }
.window { display: flex; flex-direction: column; min-width: 0; border: solid #dedede; border-width: 0 3px 3px 0; background: #f7f7f7; }
.third { border-left-width: 3px; }
.titlebar {
  display: flex; align-items: center; gap: 2px; flex: none;
  height: 21px; padding: 0 3px 2px; border-bottom: 1px solid #c2c2c2;
  background: linear-gradient(#f6f6f6, #dadada);
}
.first .titlebar { height: 25px; padding: 2px 2px 0; }
.logo { width: 16px; height: 16px; }
h1 { flex: 1; margin: 0 0 0 2px; font: 12px/16px "Liberation Sans", "Noto Sans CJK JP", sans-serif; font-feature-settings: "palt"; color: #8a8a8a; white-space: nowrap; }
.cap {
  display: flex; align-items: center; justify-content: center; gap: 4px;
  width: 26px; height: 16px; border: 1px solid #bdbdbd; border-radius: 2px;
  background: linear-gradient(#fafafa, #e6e6e6); color: #8e8e8e;
}
.cap svg { width: 12px; height: 12px; fill: #8e8e8e; }
.menu { width: 46px; font: bold 9px/12px "Liberation Sans", sans-serif; }
.menu svg { width: 7px; height: 6px; }
.body {
  flex: 1; min-height: 0; display: grid;
  grid-template: "c c" 34px "t p" minmax(0, 1fr) / 22px minmax(0, 1fr);
  column-gap: 6px; padding: 0 6px 8px;
  border: solid #c2c2c2; border-width: 0 0 1px 1px;
}
.first .body { padding: 0 5px 8px; border-left: 0; border-right: 1px solid #c2c2c2; padding-right: 4px; }
.third .body { padding-right: 7px; }
.controls { grid-area: c; display: flex; padding: 7px 0 0 28px; height: 28px; }
.combo { display: flex; flex: none; height: 21px; border: 1px solid #9e9e9e; background: #fff; }
.combo select, .combo input {
  appearance: none; flex: 1; min-width: 0; padding: 0 0 0 3px; border: 0; outline: 0; background: none;
  font: 12px/19px "Liberation Sans", "Noto Sans CJK JP", sans-serif; font-feature-settings: "palt";
}
.combo i { display: flex; align-items: center; justify-content: center; width: 16px; flex: none; border-left: 1px solid #aaa; background: linear-gradient(#e0e0e0, #cbcbcb); }
.combo i svg { width: 8px; height: 7px; fill: #505050; }
.pair { width: 75px; margin-right: 6px; }
.span { width: 64px; margin-right: 5px; }
.kind { width: 88px; margin-right: 17px; }
.combo.kind select { font-size: 11px; }
.date { width: 82px; margin-right: 6px; }
.combo.date input { padding-left: 26px; color: #888; white-space: pre; }
.date i svg { fill: #999; }
.search { width: 42px; height: 21px; border: 1px solid #c4c4c4; border-radius: 4px; background: linear-gradient(#fdfdfd, #ededed); color: #a4a4a4; font-size: 12px; }
.tools { grid-area: t; display: flex; flex-direction: column; gap: 3px; padding-top: 1px; }
.tools button { display: flex; align-items: center; justify-content: center; width: 22px; height: 22px; border: 1px solid #ababab; border-radius: 2px; background: linear-gradient(#f8f8f8, #dcdcdc); }
.tools .on { background: linear-gradient(#a8a8a8, #d2d2d2); }
.tools svg { width: 17px; height: 17px; }
.panels { grid-area: p; display: grid; grid-template-rows: minmax(0, 1fr) 151px 167px; gap: 8px; min-width: 0; }
.first .panels { grid-template-rows: minmax(0, 1fr) 150px 166px; }
.panel { position: relative; display: flex; flex-direction: column; min-width: 0; border: 1px solid #ababab; background: #f1f1f1; }
.panel:not(.macd)::after { content: ""; position: absolute; left: -1px; right: -1px; bottom: -5px; height: 1px; background: #ababab; }
.row { display: flex; flex: none; gap: 8px; height: 14px; padding-left: 4px; overflow: hidden; white-space: nowrap; font-feature-settings: "palt"; }
.row b { font-weight: 400; margin-right: -3px; }
.quote { height: 15px; padding-left: 3px; border-bottom: 1px solid #ababab; }
.studies { flex: none; height: 28px; border-bottom: 1px solid #ababab; overflow: hidden; }
.head { height: 13px; line-height: 13px; }
.c-short { color: #8f00ff; }
.c-long { color: #ff6a00; }
.c-base { color: #0a24f0; }
.c-band2 { color: #0a80ff; }
.c-band3 { color: #62b0ff; }
.c-macd { color: #f00; }
.c-signal { color: #00c4c4; }
.c-diff { color: #9a9a9a; }
.dates { position: relative; flex: none; height: 14px; padding: 0 65px 0 3px; }
.scale { position: relative; height: 14px; }
.scale time { position: absolute; top: 0; }
mark { position: absolute; left: 0; top: 0; width: 94px; height: 14px; background: #3f5578; outline: 1px solid #1f355c; outline-offset: -1px; color: #fff; white-space: nowrap; padding-left: 2px; }
.chart { flex: 1; min-height: 0; display: grid; grid-template-columns: minmax(0, 1fr) 65px; padding: 0 0 3px 3px; }
.plot { position: relative; background: #000; overflow: hidden; }
.plot svg { position: absolute; inset: 0; width: 100%; height: 100%; shape-rendering: crispEdges; }
.plot path { fill: none; stroke-width: 1px; vector-effect: non-scaling-stroke; }
.plot .minor { stroke: #282828; }
.plot .major { stroke: #424242; }
.plot .day { stroke: #727272; }
.plot .week { stroke: #a09a00; }
.plot .now { stroke: #00c800; }
.plot .bars { stroke: #929292; fill: #1c1c1c; }
.plot .price { stroke: #ff9a1c; }
.plot .up { stroke: #ff1e1e; fill: #b81212; }
.plot .down { stroke: #3c3cdc; fill: #2c2c9c; }
.plot .band3 { stroke: #5ea6ef; }
.plot .band2 { stroke: #0a78e8; }
.plot .ma-long { stroke: #e0602e; }
.plot .rsi-long { stroke: #ff6a00; }
.plot .ma-short { stroke: #8a0cf0; }
.plot .macd-line { stroke: #f00000; }
.plot .signal-line { stroke: #00b8b8; }
.mark { position: absolute; transform: translateY(-50%); font: 12px/14px "Liberation Sans", sans-serif; white-space: nowrap; }
.hi { color: #ff6a00; }
.lo { color: #00d000; }
.axis { position: relative; overflow: hidden; }
.tick, .tag { position: absolute; left: 0; right: 0; transform: translateY(-50%); text-align: center; }
.tag { height: 19px; line-height: 17px; border: 1px solid #f07d08; background: #fa9a30; color: #fff; }
.status { display: flex; flex: none; height: 16px; border-top: 1px solid #ababab; line-height: 15px; }
.cell { flex: none; width: 76px; padding-left: 4px; white-space: nowrap; }
.last { width: 73px; }
.status button { flex: none; display: flex; align-items: center; justify-content: center; width: 16px; border: 0; border-left: 1px solid #ababab; background: linear-gradient(#e2e2e2, #cdcdcd); }
.status svg { height: 8px; width: 8px; fill: #4a4a4a; }
.status input[type="range"] { appearance: none; flex: 1; min-width: 0; height: 15px; background: linear-gradient(#f4f4f4, #fff); border-left: 1px solid #ababab; }
.status input[type="range"]::-webkit-slider-thumb { appearance: none; width: 14px; height: 15px; border: solid #ababab; border-width: 0 1px; background: #d2d2d2; }
.count { flex: none; width: 29px; border: 0; border-left: 1px solid #ababab; background: #fff; text-align: center; }
.blank { flex: none; width: 16px; border-left: 1px solid #ababab; }
.edge { background: #d4ccc4; }
.taskbar { grid-column: 1 / -1; display: grid; grid-template-columns: 121fr 118fr 119fr 116fr 1137fr; border-top: 1px solid #909090; padding-top: 2px; background: #e6e6e6; }
.taskbar i { border: solid #8c8c8c; border-width: 1px 2px 0 0; background: #cfcfcf; }
.taskbar span { grid-column: 5; background: #8e8e8e; }
</style>
